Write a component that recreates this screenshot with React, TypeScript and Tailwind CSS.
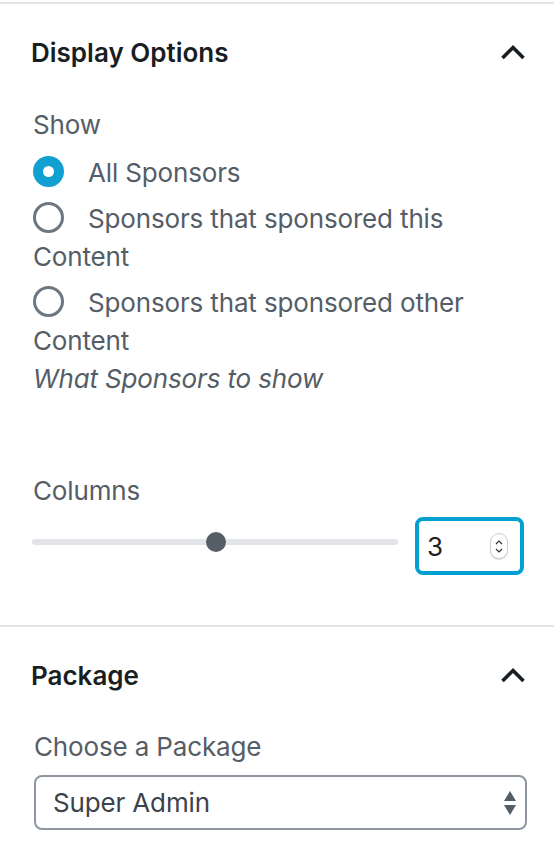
import React from "react";

function Chevron() {
  return (
    <svg width="26" height="16" viewBox="0 0 26 16" className="block">
      <path d="M2.5 14 L13 3.5 L23.5 14" fill="none" stroke="#191e23" strokeWidth="3.6" />
    </svg>
  );
}

function Radio({ checked }: { checked?: boolean }) {
  if (checked) {
    return (
      <span className="inline-flex items-center justify-center w-[31px] h-[31px] rounded-full bg-[#11a0d2] align-middle mr-[24px] relative top-[-3px]">
        <span className="w-[11px] h-[11px] rounded-full bg-white" />
      </span>
    );
  }
  return (
    <span className="inline-block w-[31px] h-[31px] rounded-full border-[3px] border-[#6c7781] bg-white align-middle mr-[24px] relative top-[-3px]" />
  );
}

export default function App() {
  return (
    <div className="w-[554px] h-[852px] bg-white overflow-hidden font-['Inter',sans-serif] text-[#555d66]">
      <div className="mt-[2px] border-t-2 border-[#e2e4e7]">
        <div className="h-[96px] flex items-center justify-between pl-[31px] pr-[28px]">
          <span className="text-[26px] font-semibold text-[#191e23]">Display Options</span>
          <Chevron />
        </div>
        <div className="pl-[33px] pr-[30px] pb-[50px] text-[26px] tracking-[-0.15px]">
          <div className="leading-[38px] pt-[6px]">Show</div>
          <div className="mt-[10px] flex flex-col gap-[8px]">
            <div className="leading-[38px]">
              <Radio checked />
              All Sponsors
            </div>
            <div className="leading-[38px]">
              <Radio />
              Sponsors that sponsored this Content
            </div>
            <div className="leading-[38px]">
              <Radio />
              Sponsors that sponsored other Content
            </div>
          </div>
          <div className="leading-[38px] italic">What Sponsors to show</div>
          <div className="leading-[38px] mt-[74px]">Columns</div>
          <div className="mt-[7px] flex items-center ml-[-1px]">
            <div className="relative flex-1 h-[20px] mb-[9px]">
              <div className="absolute left-0 right-0 top-[7px] h-[6px] rounded-full bg-[#e2e4e7]" />
              <div className="absolute left-[174px] top-0 w-[20px] h-[20px] rounded-full bg-[#555d66]" />
            </div>
            <div className="ml-[17px] w-[109px] h-[58px] rounded-[8px] border-[4px] border-[#00a0d2] flex items-center justify-between pl-[8px] pr-[12px]">
              <span className="text-[26px] text-[#1e1e1e]">3</span>
              <span className="w-[18px] h-[26px] rounded-full border border-[#d0d0d0] bg-white shadow-[0_1px_1px_rgba(0,0,0,0.15)] flex flex-col items-center justify-center gap-[3px]">
                <svg width="8" height="5" viewBox="0 0 8 5"><path d="M1 4 L4 1 L7 4" fill="none" stroke="#333" strokeWidth="1.2" /></svg>
                <svg width="8" height="5" viewBox="0 0 8 5"><path d="M1 1 L4 4 L7 1" fill="none" stroke="#333" strokeWidth="1.2" /></svg>
              </span>
            </div>
          </div>
        </div>
      </div>
      <div className="border-t-2 border-[#e2e4e7]">
        <div className="h-[96px] flex items-center justify-between pl-[31px] pr-[28px]">
          <span className="text-[26px] font-semibold text-[#191e23]">Package</span>
          <Chevron />
        </div>
        <div className="pl-[34px] pr-[27px] text-[26px] tracking-[-0.15px]">
          <div className="leading-[38px] pt-[5px]">Choose a Package</div>
          <div className="mt-[9px] h-[55px] rounded-[8px] border-2 border-[#8d96a0] flex items-center justify-between pl-[17px] pr-[8px]">
            <span className="text-[#3c434a]">Super Admin</span>
            <svg width="14" height="24" viewBox="0 0 14 24">
              <path d="M7 0 L13 10 L1 10 Z" fill="#555d66" />
              <path d="M7 24 L13 14 L1 14 Z" fill="#555d66" />
            </svg>
          </div>
        </div>
      </div>
    </div>
  );
}
